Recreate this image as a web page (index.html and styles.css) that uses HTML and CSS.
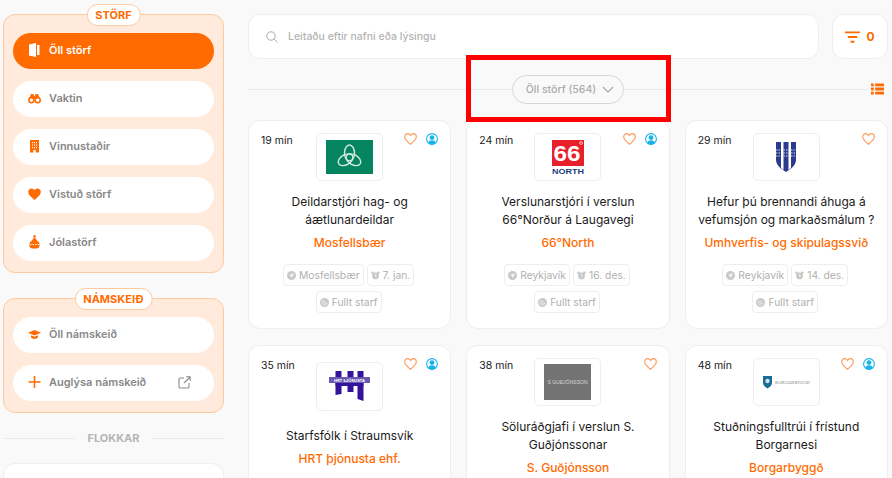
FILE: index.html
```html
<!DOCTYPE html>
<html lang="is">
<head>
<meta charset="utf-8">
<title>Störf</title>
<link rel="stylesheet" href="styles.css">
</head>
<body>
<svg class="defs" aria-hidden="true">
  <symbol id="heart" viewBox="0 0 14 13"><path d="M7 12.200C3.500 9.400.7 7 .7 4 .7 2.100 2.100.7 3.800.7c1.300 0 2.400.7 3.200 2 .8-1.300 1.900-2 3.200-2 1.700 0 3.100 1.400 3.100 3.300 0 3-2.800 5.400-6.300 8.200z" fill="none" stroke="currentColor" stroke-width="1.200"/></symbol>
  <symbol id="person" viewBox="0 0 14 14"><circle cx="7" cy="7" r="6.300" fill="#fff" stroke="currentColor" stroke-width="1.300"/><circle cx="7" cy="5.300" r="2.800" fill="currentColor"/><path d="M2.500 11.500C3.500 9.300 5 8.500 7 8.500s3.500.8 4.500 3C10.500 12.800 9 13.400 7 13.400s-3.500-.6-4.500-1.900z" fill="currentColor"/></symbol>
  <symbol id="pin" viewBox="0 0 10 10"><circle cx="5" cy="5" r="5" fill="#c9c9c9"/><path d="M7.600 2.400 2.200 4.800l2.500.6.600 2.500z" fill="#fff"/></symbol>
  <symbol id="clock" viewBox="0 0 10 10"><circle cx="5" cy="5.500" r="3.800" fill="#c9c9c9"/><circle cx="1.800" cy="2" r="1.500" fill="#c9c9c9"/><circle cx="8.200" cy="2" r="1.500" fill="#c9c9c9"/><path d="M5 3.500v2.200h1.500" stroke="#fff" fill="none" stroke-width=".7"/></symbol>
  <symbol id="type" viewBox="0 0 10 10"><circle cx="5" cy="5" r="5" fill="#c9c9c9"/><path d="M2 3l5 5M3.500 2l5 5M1.500 5l3.500 3.500" stroke="#fff" stroke-width=".7"/></symbol>
</svg>

<div class="page">
  <aside class="sidebar">
    <section class="panel">
      <span class="badge">STÖRF</span>
      <a class="nav active"><svg class="nav-icon" viewBox="0 0 13 14"><path d="M1 1.500 8 0v14l-7-1.500z" fill="currentColor"/><path d="M9 2h2.500v10H9z" fill="currentColor"/></svg>Öll störf</a>
      <a class="nav"><svg class="nav-icon" viewBox="0 0 13 14"><path d="M1 7.500 3 3h2.500l.5 2h1l.5-2H10l2 4.500z" fill="currentColor"/><circle cx="3.300" cy="9.200" r="2.500" fill="#fff" stroke="currentColor" stroke-width="1.500"/><circle cx="9.700" cy="9.200" r="2.500" fill="#fff" stroke="currentColor" stroke-width="1.500"/></svg>Vaktin</a>
      <a class="nav"><svg class="nav-icon" viewBox="0 0 13 14"><path fill-rule="evenodd" d="M2 1h9v12.500H7.700v-2.500H5.300v2.500H2zM4 3v1.200h1V3zm2 0v1.200h1V3zm2 0v1.200h1V3zM4 5.500v1.200h1V5.500zm2 0v1.200h1V5.500zm2 0v1.200h1V5.500zM4 8v1.200h1V8zm2 0v1.200h1V8zm2 0v1.200h1V8z" fill="currentColor"/></svg>Vinnustaðir</a>
      <a class="nav"><svg class="nav-icon" viewBox="0 0 13 14"><path d="M6.500 13C2.800 10 .2 7.800.2 4.800.2 2.800 1.700 1.400 3.500 1.400c1.300 0 2.300.7 3 1.900.7-1.200 1.700-1.900 3-1.900 1.800 0 3.300 1.400 3.300 3.400 0 3-2.600 5.200-6.300 8.200z" fill="currentColor"/></svg>Vistuð störf</a>
      <a class="nav"><svg class="nav-icon" viewBox="0 0 13 14"><circle cx="6.500" cy="1.200" r="1.200" fill="currentColor"/><path d="M6.500 2 9.500 6h-6z" fill="currentColor"/><rect x="1.500" y="6" width="10" height="7.500" rx="3.200" fill="currentColor"/><path d="M2 9.500h9" stroke="#fff" stroke-width="1.200" stroke-dasharray="1.500 1"/></svg>Jólastörf</a>
    </section>

    <section class="panel">
      <span class="badge">NÁMSKEIÐ</span>
      <a class="nav"><svg class="nav-icon" viewBox="0 0 13 14"><path d="M6.500 3 13 5.800 6.500 8.600 0 5.800z" fill="currentColor"/><path d="M3 8.200l3.500 1.500L10 8.200v2.400c-1 .9-2.200 1.400-3.500 1.400S4 11.500 3 10.600z" fill="currentColor"/></svg>Öll námskeið</a>
      <a class="nav"><svg class="nav-icon" viewBox="0 0 13 14"><path d="M6.500 1v12M.5 7h12" stroke="currentColor" stroke-width="1.600"/></svg>Auglýsa námskeið<svg class="nav-ext" viewBox="0 0 13 13"><path d="M6 2H2.300C1.600 2 1 2.600 1 3.300v7.400C1 11.400 1.600 12 2.300 12h7.400c.7 0 1.300-.6 1.300-1.300V7M8 .8h4.200V5M12 1 6 7" fill="none" stroke="currentColor" stroke-width="1.100"/></svg></a>
    </section>

    <div class="divider"><span>FLOKKAR</span></div>
    <div class="side-card"></div>
  </aside>

  <main class="main">
    <div class="topbar">
      <div class="search">
        <svg class="search-icon" viewBox="0 0 12 12"><circle cx="5" cy="5" r="4.200" fill="none" stroke="currentColor" stroke-width="1"/><path d="M8 8l3.500 3.500" stroke="currentColor" stroke-width="1"/></svg>
        <span>Leitaðu eftir nafni eða lýsingu</span>
      </div>
      <div class="filter">
        <svg class="filter-icon" viewBox="0 0 16 12"><path d="M0 1h16M3 6h10M6 11h4" stroke="currentColor" stroke-width="2"/></svg>
        <span>0</span>
      </div>
    </div>

    <div class="sortbar">
      <div class="pill">Öll störf (564)<svg class="chev" viewBox="0 0 12 7"><path d="M1 1l5 5 5-5" fill="none" stroke="currentColor" stroke-width="1.100"/></svg></div>
      <svg class="list-icon" viewBox="0 0 14 12"><path d="M0 0h3v3H0zM4.500 0H14v3H4.500zM0 4.500h3v3H0zM4.500 4.500H14v3H4.500zM0 9h3v3H0zM4.500 9H14v3H4.500z" fill="currentColor"/></svg>
    </div>

    <div class="grid">
      <article class="card">
        <span class="time">19 mín</span>
        <div class="marks"><svg class="heart"><use href="#heart"/></svg><svg class="person"><use href="#person"/></svg></div>
        <div class="logo"><svg class="logo-art" width="47" height="34" viewBox="0 0 47 34"><rect width="47" height="34" fill="#05855f"/><g fill="none" stroke="#d5ebe2" stroke-width="1.400"><ellipse cx="23.500" cy="13" rx="5" ry="8"/><ellipse cx="23.500" cy="13" rx="5" ry="8" transform="rotate(120 23.500 17.500)"/><ellipse cx="23.500" cy="13" rx="5" ry="8" transform="rotate(240 23.500 17.500)"/></g></svg></div>
        <h2 class="title">Deildarstjóri hag- og áætlunardeildar</h2>
        <p class="company">Mosfellsbær</p>
        <div class="tags">
          <span class="tag"><svg class="tag-icon"><use href="#pin"/></svg>Mosfellsbær</span>
          <span class="tag"><svg class="tag-icon"><use href="#clock"/></svg>7. jan.</span>
          <span class="tag"><svg class="tag-icon"><use href="#type"/></svg>Fullt starf</span>
        </div>
      </article>

      <article class="card">
        <span class="time">24 mín</span>
        <div class="marks"><svg class="heart"><use href="#heart"/></svg><svg class="person"><use href="#person"/></svg></div>
        <div class="logo"><svg class="logo-art" width="32" height="34" viewBox="0 0 32 34"><rect width="32" height="26" fill="#e8202a"/><text x="15" y="20.500" class="svg-66" textLength="27" lengthAdjust="spacingAndGlyphs">66</text><circle cx="29" cy="3" r="1.400" fill="none" stroke="#fff" stroke-width=".7"/><text x="16" y="33.500" class="svg-north" textLength="32" lengthAdjust="spacingAndGlyphs">NORTH</text></svg></div>
        <h2 class="title">Verslunarstjóri í verslun 66°Norður á Laugavegi</h2>
        <p class="company">66°North</p>
        <div class="tags">
          <span class="tag"><svg class="tag-icon"><use href="#pin"/></svg>Reykjavík</span>
          <span class="tag"><svg class="tag-icon"><use href="#clock"/></svg>16. des.</span>
          <span class="tag"><svg class="tag-icon"><use href="#type"/></svg>Fullt starf</span>
        </div>
      </article>

      <article class="card">
        <span class="time">29 mín</span>
        <div class="marks"><svg class="heart"><use href="#heart"/></svg></div>
        <div class="logo"><svg class="logo-art" width="20" height="30" viewBox="0 0 20 30"><path d="M0 0h20v18c0 5-5 9-10 12C5 27 0 23 0 18z" fill="#2c3a8c"/><path d="M5 0h2.500v28L5 26zM12.500 0H15v26l-2.500 2z" fill="#fff"/><path d="M0 8h20M0 11h20M0 14h20" stroke="#fff" stroke-dasharray="1.500 1" stroke-width=".8"/></svg></div>
        <h2 class="title">Hefur þú brennandi áhuga á vefumsjón og markaðsmálum ?</h2>
        <p class="company">Umhverfis- og skipulagssvið</p>
        <div class="tags">
          <span class="tag"><svg class="tag-icon"><use href="#pin"/></svg>Reykjavík</span>
          <span class="tag"><svg class="tag-icon"><use href="#clock"/></svg>14. des.</span>
          <span class="tag"><svg class="tag-icon"><use href="#type"/></svg>Fullt starf</span>
        </div>
      </article>

      <article class="card card-short">
        <span class="time">35 mín</span>
        <div class="marks"><svg class="heart"><use href="#heart"/></svg><svg class="person"><use href="#person"/></svg></div>
        <div class="logo"><svg class="logo-art" width="42" height="32" viewBox="0 0 42 32"><path d="M6.500 0h6v23l-6 1zM18.500 0h6v21h-6zM28.500 0h6v30l-6-2z" fill="#33129c"/><path d="M6.500 12h28v3h-28z" fill="#33129c"/><rect x="0" y="6" width="41" height="6" fill="#6a58b5"/><text x="20.500" y="10.800" class="svg-hrt">HRT ÞJÓNUSTA</text></svg></div>
        <h2 class="title">Starfsfólk í Straumsvík</h2>
        <p class="company">HRT þjónusta ehf.</p>
      </article>

      <article class="card">
        <span class="time">38 mín</span>
        <div class="marks"><svg class="heart"><use href="#heart"/></svg></div>
        <div class="logo"><svg class="logo-art" width="47" height="36" viewBox="0 0 47 36"><rect width="47" height="36" fill="#737373"/><text x="23.500" y="20" class="svg-sg">S GUÐJÓNSSON</text></svg></div>
        <h2 class="title">Söluráðgjafi í verslun S. Guðjónssonar</h2>
        <p class="company">S. Guðjónsson</p>
      </article>

      <article class="card">
        <span class="time">48 mín</span>
        <div class="marks"><svg class="heart"><use href="#heart"/></svg><svg class="person"><use href="#person"/></svg></div>
        <div class="logo"><svg class="logo-art" width="47" height="14" viewBox="0 0 47 14"><path d="M0 1h9v7c0 2-2 4-4.500 5.500C2 12 0 10 0 8z" fill="#1c6a97"/><circle cx="4.500" cy="6" r="2.200" fill="#cfe3ee"/><text x="12" y="8.500" class="svg-borg" textLength="35">BORGARBYGGÐ</text></svg></div>
        <h2 class="title">Stuðningsfulltrúi í frístund Borgarnesi</h2>
        <p class="company">Borgarbyggð</p>
      </article>
    </div>
  </main>
</div>

<div class="highlight"></div>
</body>
</html>
```

FILE: styles.css
```css
* { box-sizing: border-box; }

html, body {
  margin: 0;
  height: 100%;
  overflow: hidden;
}

body {
  background: #f9f9f9;
  font-family: Inter, "Liberation Sans", sans-serif;
  color: #1a1a1a;
  position: relative;
}

.defs { display: none; }

.page {
  display: flex;
  align-items: flex-start;
  padding: 14px 4px 0 3px;
  gap: 24px;
}

/* Sidebar */
.sidebar {
  width: 221px;
  flex: none;
  display: flex;
  flex-direction: column;
}

.panel {
  position: relative;
  display: flex;
  flex-direction: column;
  gap: 12px;
  padding: 18px 9px 11px;
  margin-bottom: 25px;
  background: #ffeadb;
  border: 1px solid #fdcb9f;
  border-radius: 12px;
}

.badge {
  position: absolute;
  top: -11px;
  left: 50%;
  transform: translateX(-50%);
  height: 22px;
  padding: 0 8px;
  display: flex;
  align-items: center;
  background: #fff;
  border: 1px solid #fdcb9f;
  border-radius: 11px;
  color: #ff6b00;
  font-size: 11px;
  font-weight: 700;
  white-space: nowrap;
}

.nav {
  display: flex;
  align-items: center;
  height: 36px;
  padding: 0 0 2px 15px;
  background: #fff;
  border-radius: 18px;
  color: #888;
  font-size: 11px;
  font-weight: 600;
}

.nav.active {
  background: #ff6b00;
  color: #fff;
}

.nav-icon {
  width: 13px;
  height: 14px;
  margin-right: 8px;
  flex: none;
  color: #ff6b00;
}

.nav.active .nav-icon { color: #fff; }

.nav-ext {
  width: 13px;
  height: 13px;
  margin-left: auto;
  margin-right: 23px;
  color: #8a8a8a;
}

.divider {
  display: flex;
  align-items: center;
  gap: 12px;
  height: 0;
  color: #b5b5b5;
  font-size: 11px;
  font-weight: 700;
}

.divider::before,
.divider::after {
  content: "";
  flex: 1;
  height: 1px;
  background: #ebebeb;
}

.side-card {
  height: 60px;
  margin-top: 25px;
  background: #fff;
  border: 1px solid #eee;
  border-radius: 12px;
}

/* Main column */
.main {
  flex: 1;
  min-width: 0;
}

.topbar {
  display: flex;
  gap: 13px;
}

.search {
  flex: 1;
  height: 45px;
  display: flex;
  align-items: center;
  padding-left: 17px;
  background: #fff;
  border: 1px solid #eee;
  border-radius: 12px;
  color: #b3b3b3;
  font-size: 10.5px;
  font-weight: 500;
}

.search-icon {
  width: 12px;
  height: 12px;
  margin-right: 10px;
  color: #aaa;
}

.filter {
  width: 56px;
  height: 45px;
  display: flex;
  align-items: center;
  justify-content: center;
  gap: 6px;
  background: #fff;
  border: 1px solid #eee;
  border-radius: 12px;
  color: #ff6b00;
  font-size: 12px;
  font-weight: 700;
}

.filter-icon {
  width: 15px;
  height: 12px;
}

.sortbar {
  position: relative;
  display: flex;
  align-items: center;
  justify-content: center;
  height: 29px;
  margin: 16px 0;
}

.sortbar::before {
  content: "";
  position: absolute;
  left: 0;
  right: 20px;
  top: 14px;
  height: 1px;
  background: #e8e8e8;
}

.pill {
  position: relative;
  display: flex;
  align-items: center;
  gap: 6px;
  height: 29px;
  padding: 0 9px 0 13px;
  background: #f9f9f9;
  border: 1px solid #d6d6d6;
  border-radius: 14.5px;
  color: #ababab;
  font-size: 10.5px;
  font-weight: 500;
}

.chev {
  width: 12px;
  height: 7px;
  color: #a5a5a5;
}

.list-icon {
  position: absolute;
  right: 4px;
  top: 8px;
  width: 13px;
  height: 12px;
  color: #ff6b00;
}

.grid {
  display: grid;
  grid-template-columns: repeat(3, 1fr);
  gap: 16px 15px;
}

.card {
  position: relative;
  display: flex;
  flex-direction: column;
  align-items: center;
  height: 209px;
  padding: 12px 12px 0;
  background: #fff;
  border: 1px solid #eee;
  border-radius: 12px;
  text-align: center;
}

.time {
  position: absolute;
  left: 12px;
  top: 13px;
  font-size: 10.5px;
  line-height: 14px;
}

.marks {
  position: absolute;
  right: 12px;
  top: 12px;
  display: flex;
  align-items: center;
  gap: 9px;
}

.heart {
  width: 13px;
  height: 12px;
  color: #fb9a5d;
}

.person {
  width: 12px;
  height: 12px;
  color: #17b3ea;
}

.logo {
  width: 67px;
  height: 48px;
  flex: none;
  display: flex;
  align-items: center;
  justify-content: center;
  border: 1px solid #eee;
  border-radius: 5px;
}

.logo-art { display: block; }

.title {
  margin: 12px 0 0;
  font-size: 12px;
  font-weight: 400;
  line-height: 18px;
  color: #1a1a1a;
}

.company {
  margin: 6px 0 0;
  font-size: 12px;
  font-weight: 500;
  line-height: 16px;
  color: #ff6b00;
}

.card-short { padding-top: 16px; }
.card-short .logo { height: 49px; }
.card-short .title { margin-top: 16px; }

.tags {
  display: flex;
  flex-wrap: wrap;
  justify-content: center;
  gap: 5px 3px;
  margin: 13px -7px 0 -9px;
}

.tag {
  display: flex;
  align-items: center;
  gap: 3px;
  height: 22px;
  padding: 0 3px;
  border: 1px solid #eee;
  border-radius: 4px;
  color: #b0b0b0;
  font-size: 10.3px;
  white-space: nowrap;
}

.tag-icon {
  width: 9px;
  height: 9px;
}

/* Logo wordmarks */
.svg-66 { font: 700 22px "Liberation Sans", sans-serif; fill: #fff; text-anchor: middle; }
.svg-north { font: 700 6.5px "Liberation Sans", sans-serif; fill: #1d3f7d; text-anchor: middle; }
.svg-hrt { font: 700 4px "Liberation Sans", sans-serif; fill: #fff; text-anchor: middle; }
.svg-sg { font: 400 5px "Liberation Sans", sans-serif; fill: #d8d8d8; text-anchor: middle; }
.svg-borg { font: 400 4px "DejaVu Serif", serif; fill: #8a8a8a; }

/* Annotation drawn over the screenshot */
.highlight {
  position: absolute;
  left: 466px;
  top: 55px;
  width: 205px;
  height: 67px;
  border: 5px solid #f00;
  pointer-events: none;
}
```
